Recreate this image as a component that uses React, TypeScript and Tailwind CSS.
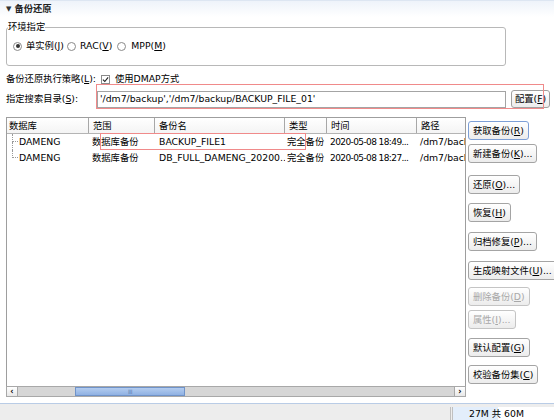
import React from 'react'

function Mn({ k }: { k: string }) {
  return <span className="underline underline-offset-[1px]">{k}</span>
}

function Radio({ checked }: { checked?: boolean }) {
  return (
    <span className="w-[9px] h-[9px] rounded-full border border-[#8a8a8a] bg-white flex items-center justify-center shrink-0">
      {checked && <span className="w-[4px] h-[4px] rounded-full bg-[#333]" />}
    </span>
  )
}

interface ActionButton {
  label: string
  key: string
  dots?: boolean
  disabled?: boolean
  focused?: boolean
  mt: string
}

const actions: ActionButton[] = [
  { label: '获取备份', key: 'R', focused: true, mt: 'mt-[4px]' },
  { label: '新建备份', key: 'K', dots: true, mt: 'mt-[4px]' },
  { label: '还原', key: 'O', dots: true, mt: 'mt-[12px]' },
  { label: '恢复', key: 'H', mt: 'mt-[9px]' },
  { label: '归档修复', key: 'P', dots: true, mt: 'mt-[10px]' },
  { label: '生成映射文件', key: 'U', dots: true, mt: 'mt-[10px]' },
  { label: '删除备份', key: 'D', disabled: true, mt: 'mt-[7px]' },
  { label: '属性', key: 'I', dots: true, disabled: true, mt: 'mt-[4px]' },
  { label: '默认配置', key: 'G', mt: 'mt-[9px]' },
  { label: '校验备份集', key: 'C', mt: 'mt-[8px]' },
]

const rows = [
  { db: 'DAMENG', scope: '数据库备份', name: 'BACKUP_FILE1', type: '完全备份', time: '2020-05-08 18:49...', path: '/dm7/backup' },
  { db: 'DAMENG', scope: '数据库备份', name: 'DB_FULL_DAMENG_20200...', type: '完全备份', time: '2020-05-08 18:27...', path: '/dm7/backup' },
]

const headers = ['数据库', '范围', '备份名', '类型', '时间', '路径']

export default function App() {
  return (
    <div className="w-[554px] h-[420px] bg-white text-black text-[9.3px] leading-[12px] font-['DejaVu_Sans','Noto_Sans_CJK_SC',sans-serif] flex flex-col overflow-hidden">
      {/* section header */}
      <div className="h-[17px] shrink-0 border-t border-[#dde6f2] bg-gradient-to-b from-[#eef3fa] to-white flex items-center pl-[6px] gap-[3px]">
        <span className="text-[7px] text-[#333]">▼</span>
        <span className="font-bold text-[#222]">备份还原</span>
      </div>

      <div className="flex-1 flex flex-col px-[6px]">
        {/* environment group */}
        <fieldset className="mt-[4px] w-[500px] border border-[#b8b8b8] rounded-[3px] px-[5px] pt-[7px] pb-[13px]">
          <legend className="-ml-[4px] px-0">环境指定</legend>
          <div className="flex items-center h-[12px]">
            <span className="ml-[1px]"><Radio checked /></span>
            <span className="ml-[4px]">单实例(<Mn k="J" />)</span>
            <span className="ml-[3px]"><Radio /></span>
            <span className="ml-[4px]">RAC(<Mn k="V" />)</span>
            <span className="ml-[5px]"><Radio /></span>
            <span className="ml-[5px]">MPP(<Mn k="M" />)</span>
          </div>
        </fieldset>

        {/* strategy */}
        <div className="mt-[7px] h-[12px] flex items-center">
          <span>备份还原执行策略(<Mn k="L" />):</span>
          <span className="ml-[5px] w-[9px] h-[9px] border border-[#8a8a8a] bg-white flex items-center justify-center">
            <svg viewBox="0 0 8 8" className="w-[7px] h-[7px]">
              <path d="M1 4.2 L3.2 6.3 L7 1.5" fill="none" stroke="#222" strokeWidth="1.3" />
            </svg>
          </span>
          <span className="ml-[5px]">使用DMAP方式</span>
        </div>

        {/* search dirs */}
        <div className="relative mt-[5px] h-[18px] flex items-center">
          <span className="w-[91px] shrink-0 whitespace-nowrap">指定搜索目录(<Mn k="S" />):</span>
          <div className="w-[409px] shrink-0 h-[17px] border border-[#a4a4a4] bg-white flex items-center pl-[2px] whitespace-nowrap">
            '/dm7/backup','/dm7/backup/BACKUP_FILE_01'
          </div>
          <button className="ml-[5px] shrink-0 whitespace-nowrap h-[18px] px-[3px] border border-[#a0a0a0] rounded-[3px] bg-gradient-to-b from-white to-[#ececec]">
            配置(<Mn k="F" />)
          </button>
          <div className="absolute left-[90px] -top-[6px] w-[448px] h-[25px] border border-[#f08a8a] pointer-events-none" />
        </div>

        {/* table + actions */}
        <div className="mt-[9px] flex h-[280px]">
          <div className="relative w-[460px] shrink-0 h-full border border-[#9e9e9e] flex flex-col">
            <div className="grid grid-cols-[82px_66px_130px_42px_90px_1fr] h-[16px] border-b border-[#b4b4b4] bg-gradient-to-b from-white to-[#f4f4f4]">
              {headers.map((h, i) => (
                <div key={h} className={`flex items-center overflow-hidden whitespace-nowrap ${i === 0 ? 'pl-[2px]' : 'pl-[4px]'} ${i < 5 ? 'border-r border-[#a8a8a8]' : ''}`}>
                  {h}
                </div>
              ))}
            </div>
            <div className="flex-1">
              {rows.map((r, i) => (
                <div key={i} className="grid grid-cols-[82px_66px_130px_42px_90px_1fr] h-[16px]">
                  <div className="flex items-stretch">
                    <div className="ml-[5px] w-[6px] flex flex-col">
                      <div className="h-[8px] border-l border-b border-dotted border-[#9a9a9a]" />
                      <div className={`flex-1 ${i < rows.length - 1 ? 'border-l border-dotted border-[#9a9a9a]' : ''}`} />
                    </div>
                    <span className="ml-[1px] flex items-center">{r.db}</span>
                  </div>
                  <div className="pl-[3px] flex items-center whitespace-nowrap overflow-hidden">{r.scope}</div>
                  <div className="pl-[4px] flex items-center whitespace-nowrap overflow-hidden">{r.name}</div>
                  <div className="pl-[2px] flex items-center whitespace-nowrap overflow-hidden">{r.type}</div>
                  <div className="pl-[3px] flex items-center whitespace-nowrap overflow-hidden text-[9px] tracking-[-0.6px]">{r.time}</div>
                  <div className="pl-[3px] flex items-center whitespace-nowrap overflow-hidden">{r.path}</div>
                </div>
              ))}
            </div>
            {/* horizontal scrollbar */}
            <div className="h-[11px] mx-[-1px] mb-[-1px] border border-[#a8a8a8] bg-[#d6d6d6] flex items-stretch">
              <div className="w-[11px] border-r border-[#a8a8a8] bg-gradient-to-b from-white to-[#e8e8e8] flex items-center justify-center text-[8px] leading-none font-bold">‹</div>
              <div className="ml-[57px] w-[110px] border border-[#6f93c9] bg-gradient-to-b from-[#b3ccef] to-[#8fb1e3] flex items-center justify-center">
                <span className="text-[6px] leading-none text-[#5d7fb5] tracking-[-0.5px]">III</span>
              </div>
              <div className="flex-1" />
              <div className="w-[11px] border-l border-[#a8a8a8] bg-gradient-to-b from-white to-[#e8e8e8] flex items-center justify-center text-[8px] leading-none font-bold">›</div>
            </div>
            <div className="absolute left-[93px] top-[15px] w-[206px] h-[17px] border border-[#f08a8a] pointer-events-none" />
          </div>

          <div className="flex flex-col items-start ml-[2px]">
            {actions.map(a => (
              <button
                key={a.key}
                disabled={a.disabled}
                className={`${a.mt} h-[19px] px-[4px] rounded-[3px] border whitespace-nowrap bg-gradient-to-b from-white to-[#ececec] ${a.focused ? 'border-[#7d9fd6]' : 'border-[#a4a4a4]'} ${a.disabled ? 'text-[#a8a8a8] border-[#c4c4c4]' : ''}`}
              >
                {a.label}(<Mn k={a.key} />){a.dots ? '...' : ''}
              </button>
            ))}
          </div>
        </div>
      </div>

      {/* status bar */}
      <div className="mt-[6px] h-[17px] shrink-0 border-t border-[#b9cce6] bg-[#ededed] flex justify-end items-end">
        <div className="h-[13px] w-[3px] border-x border-[#c0c0c0]" />
        <div className="h-[13px] w-[101px] bg-white flex items-stretch relative">
          <div className="w-[45px] bg-[#e3eefb]" />
          <span className="absolute inset-0 flex items-center justify-center pr-[14px]">27M 共 60M</span>
        </div>
      </div>
    </div>
  )
}
